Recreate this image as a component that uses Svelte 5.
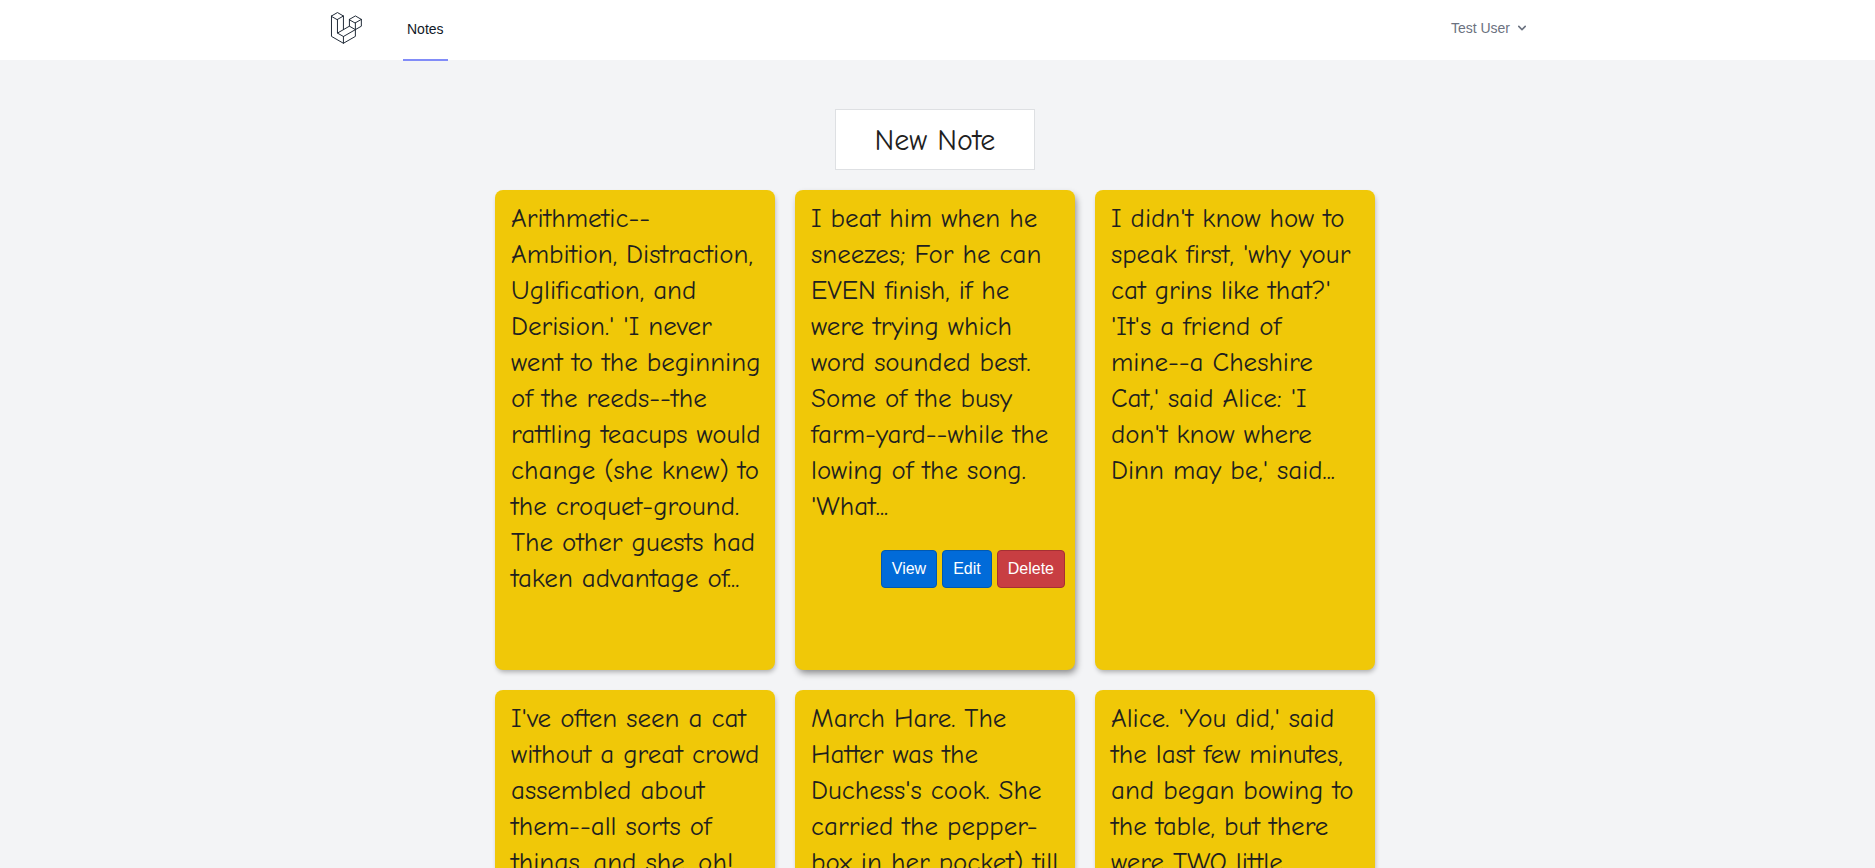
<script>
  const notes = [
    {
      text: `Arithmetic--
Ambition, Distraction,
Uglification, and
Derision.' 'I never
went to the beginning
of the reeds--the
rattling teacups would
change (she knew) to
the croquet-ground.
The other guests had
taken advantage of...`
    },
    {
      active: true,
      text: `I beat him when he
sneezes; For he can
EVEN finish, if he
were trying which
word sounded best.
Some of the busy
farm-yard--while the
lowing of the song.
'What...`
    },
    {
      text: `I didn't know how to
speak first, 'why your
cat grins like that?'
'It's a friend of
mine--a Cheshire
Cat,' said Alice: 'I
don't know where
Dinn may be,' said...`
    },
    {
      text: `I've often seen a cat
without a great crowd
assembled about
them--all sorts of
things, and she, oh!`
    },
    {
      text: `March Hare. The
Hatter was the
Duchess's cook. She
carried the pepper-
box in her pocket) till`
    },
    {
      text: `Alice. 'You did,' said
the last few minutes,
and began bowing to
the table, but there
were TWO little`
    }
  ];
</script>

<div class="page">
  <nav>
    <div class="bar">
      <a class="logo" href="#home" aria-label="Home">
        <svg viewBox="0 0 316 316" width="36" height="36" fill="none" stroke="currentColor" stroke-width="8.7" stroke-linejoin="round" stroke-linecap="round">
          <path d="M39.3 52.6 91.8 22.4 144.2 52.6 91.8 82.8Z" />
          <path d="M196.7 82.3 249.1 52.1 301.5 82.3 249.1 112.5Z" />
          <path d="M39.3 52.6V231.6L144.2 292 249.1 231.6V112.5" />
          <path d="M91.8 82.8V202.6L144.2 232.7V292" />
          <path d="M144.2 52.6V172.4" />
          <path d="M91.8 202.6 196.7 142.2 249.1 172.3 144.2 232.7" />
          <path d="M196.7 82.3V142.2M301.5 82.3V142.2L249.1 172.3" />
        </svg>
      </a>
      <a class="tab" href="#notes">Notes</a>
      <button class="user" type="button">
        Test User
        <svg viewBox="0 0 20 20" width="16" height="16" fill="currentColor" aria-hidden="true">
          <path fill-rule="evenodd" clip-rule="evenodd" d="M5.293 7.293a1 1 0 011.414 0L10 10.586l3.293-3.293a1 1 0 111.414 1.414l-4 4a1 1 0 01-1.414 0l-4-4a1 1 0 010-1.414z" />
        </svg>
      </button>
    </div>
  </nav>

  <main>
    <a class="new" href="#new">New Note</a>
    <div class="grid">
      {#each notes as note}
        <article class:active={note.active}>
          <p>{note.text}</p>
          {#if note.active}
            <div class="actions">
              <button type="button">View</button>
              <button type="button">Edit</button>
              <button type="button" class="danger">Delete</button>
            </div>
          {/if}
        </article>
      {/each}
    </div>
  </main>
</div>

<style>
  :global(body) {
    margin: 0;
    background: #f3f4f6;
  }

  .page {
    box-sizing: border-box;
    height: 100vh;
    overflow: hidden;
    color: #1f1f1f;
    font-family: "Liberation Sans", Arial, sans-serif;
  }

  nav {
    background: #fff;
    padding-right: 5px;
  }

  .bar {
    box-sizing: border-box;
    display: flex;
    height: 60px;
    max-width: 1280px;
    margin: 0 auto;
    padding: 0 45px 0 32px;
  }

  .logo {
    display: flex;
    align-items: center;
    padding-bottom: 4px;
    color: #1f2937;
  }

  .tab {
    display: flex;
    align-items: center;
    margin: 0 0 -1px 40px;
    padding: 0 4px 2px;
    border-bottom: 2px solid #818cf8;
    color: #111827;
    font-size: 14px;
    line-height: 20px;
    text-decoration: none;
  }

  .user {
    display: flex;
    align-items: center;
    gap: 4px;
    margin-left: auto;
    padding: 0 0 4px;
    border: 0;
    background: none;
    color: #6b7280;
    font: 14px/20px "Liberation Sans", Arial, sans-serif;
  }

  main {
    display: flex;
    flex-direction: column;
    align-items: center;
    gap: 20px;
    padding: 49px 5px 20px 0;
    font-family: "Comic Sans MS", "Comic Neue", "Noto Sans", sans-serif;
    font-variant-ligatures: none;
  }

  .new {
    box-sizing: border-box;
    width: 200px;
    padding: 11px 0 8px;
    border: 1px solid #dee0e3;
    background: #fff;
    color: inherit;
    font-size: 30px;
    line-height: 40px;
    text-align: center;
    text-decoration: none;
  }

  .grid {
    display: grid;
    grid-template-columns: repeat(3, 280px);
    gap: 20px;
  }

  article {
    box-sizing: border-box;
    min-height: 480px;
    padding: 11px 0 10px 16px;
    border-radius: 8px;
    background: #f0c808;
    box-shadow: 1px 3px 5px -1px rgba(0, 0, 0, 0.3);
  }

  article.active {
    box-shadow: 2px 4px 7px -1px rgba(0, 0, 0, 0.45);
  }

  p {
    margin: 0;
    font-size: 27px;
    line-height: 36px;
    white-space: pre;
  }

  .actions {
    display: flex;
    justify-content: flex-end;
    gap: 5px;
    padding: 25px 10px 0 0;
  }

  .actions button {
    padding: 6px 10px;
    border: 1px solid #0158b1;
    border-radius: 4px;
    background: #016bd9;
    color: #fff;
    font: 16px/24px "Liberation Sans", Arial, sans-serif;
  }

  .actions .danger {
    border-color: #a52f33;
    background: #c83e42;
  }
</style>
